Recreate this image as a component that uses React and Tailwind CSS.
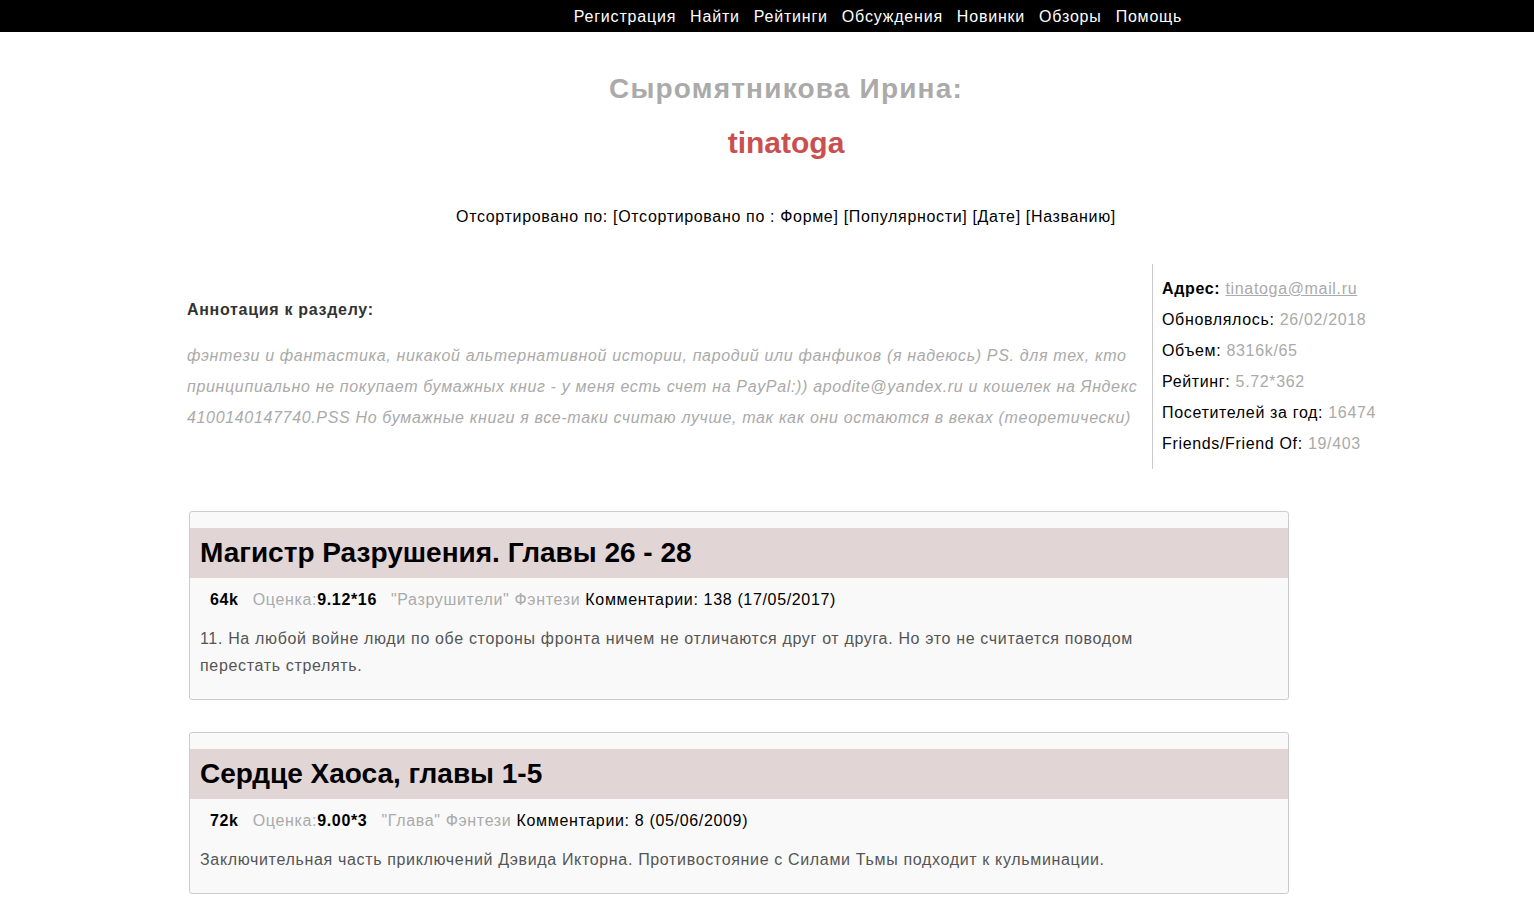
export default function App() {
  const font = { fontFamily: '"Liberation Sans", Arial, sans-serif' };
  return (
    <div className="w-full overflow-hidden bg-white min-h-[915px] tracking-[0.66px]" style={font}>
      <div className="h-8 bg-black flex items-center justify-center pl-[222px] gap-[14px] text-white text-[16px] pt-[1px] tracking-[0.8px]">
        <span>Регистрация</span>
        <span>Найти</span>
        <span>Рейтинги</span>
        <span>Обсуждения</span>
        <span>Новинки</span>
        <span>Обзоры</span>
        <span>Помощь</span>
      </div>
      <div className="w-[1572px]">
        <div className="text-center pt-[39px]">
          <div className="text-[28px] leading-[36px] font-bold text-[#aaaaaa] tracking-[1.2px]">Сыромятникова Ирина:</div>
          <div className="text-[30px] leading-[36px] font-bold text-[#c9504f] mt-[18px] tracking-normal">tinatoga</div>
          <div className="text-[16px] leading-[20px] text-black mt-[46px]">
            Отсортировано по: [Отсортировано по : Форме] [Популярности] [Дате] [Названию]
          </div>
        </div>
        <div className="flex mt-[37px] ml-[187px]">
          <div className="w-[965px] pt-[36px]">
            <div className="text-[16px] leading-[20px] font-bold text-[#333333] tracking-[0.7px]">Аннотация к разделу:</div>
            <div className="mt-[20px] text-[16px] leading-[31px] italic text-[#aaaaaa] whitespace-nowrap">
              фэнтези и фантастика, никакой альтернативной истории, пародий или фанфиков (я надеюсь) PS. для тех, кто
              <br />
              принципиально не покупает бумажных книг - у меня есть счет на PayPal:)) apodite@yandex.ru и кошелек на Яндекс
              <br />
              4100140147740.PSS Но бумажные книги я все-таки считаю лучше, так как они остаются в веках (теоретически)
            </div>
          </div>
          <div className="border-l border-[#cccccc] pl-[9px] pt-[9px] pb-[10px] text-[16px] leading-[31px] text-black whitespace-nowrap">
            <div>
              <span className="font-bold">Адрес:</span>{' '}
              <span className="text-[#aaaaaa] underline">tinatoga@mail.ru</span>
            </div>
            <div>
              Обновлялось: <span className="text-[#aaaaaa]">26/02/2018</span>
            </div>
            <div>
              Объем: <span className="text-[#aaaaaa]">8316k/65</span>
            </div>
            <div>
              Рейтинг: <span className="text-[#aaaaaa]">5.72*362</span>
            </div>
            <div>
              Посетителей за год: <span className="text-[#aaaaaa]">16474</span>
            </div>
            <div>
              Friends/Friend Of: <span className="text-[#aaaaaa]">19/403</span>
            </div>
          </div>
        </div>

        <div className="ml-[189px] w-[1100px] mt-[42px] flex flex-col gap-[32px]">
          <div className="border border-[#cccccc] rounded-[3px] bg-[#f9f9f9] pt-[16px] pb-[20px]">
            <div className="bg-[#e1d5d6] h-[50px] flex items-center px-[10px]">
              <span className="text-[28px] font-bold text-black tracking-normal">Магистр Разрушения. Главы 26 - 28</span>
            </div>
            <div className="px-[10px] pt-[12px] text-[16px] leading-[20px]">
              <span className="font-bold text-black ml-[10px]">64k</span>
              <span className="text-[#aaaaaa] ml-[14px]">Оценка:</span>
              <span className="font-bold text-black">9.12*16</span>
              <span className="text-[#aaaaaa] ml-[14px]">"Разрушители" Фэнтези</span>{' '}
              <span className="text-black">Комментарии: 138 (17/05/2017)</span>
            </div>
            <div className="px-[10px] mt-[15px] text-[16px] leading-[27px] text-[#555555] whitespace-nowrap">
              11. На любой войне люди по обе стороны фронта ничем не отличаются друг от друга. Но это не считается поводом
              <br />
              перестать стрелять.
            </div>
          </div>

          <div className="border border-[#cccccc] rounded-[3px] bg-[#f9f9f9] pt-[16px] pb-[20px]">
            <div className="bg-[#e1d5d6] h-[50px] flex items-center px-[10px]">
              <span className="text-[28px] font-bold text-black tracking-normal">Сердце Хаоса, главы 1-5</span>
            </div>
            <div className="px-[10px] pt-[12px] text-[16px] leading-[20px]">
              <span className="font-bold text-black ml-[10px]">72k</span>
              <span className="text-[#aaaaaa] ml-[14px]">Оценка:</span>
              <span className="font-bold text-black">9.00*3</span>
              <span className="text-[#aaaaaa] ml-[14px]">"Глава" Фэнтези</span>{' '}
              <span className="text-black">Комментарии: 8 (05/06/2009)</span>
            </div>
            <div className="px-[10px] mt-[15px] text-[16px] leading-[27px] text-[#555555] whitespace-nowrap">
              Заключительная часть приключений Дэвида Икторна. Противостояние с Силами Тьмы подходит к кульминации.
            </div>
          </div>
        </div>
      </div>
    </div>
  );
}
